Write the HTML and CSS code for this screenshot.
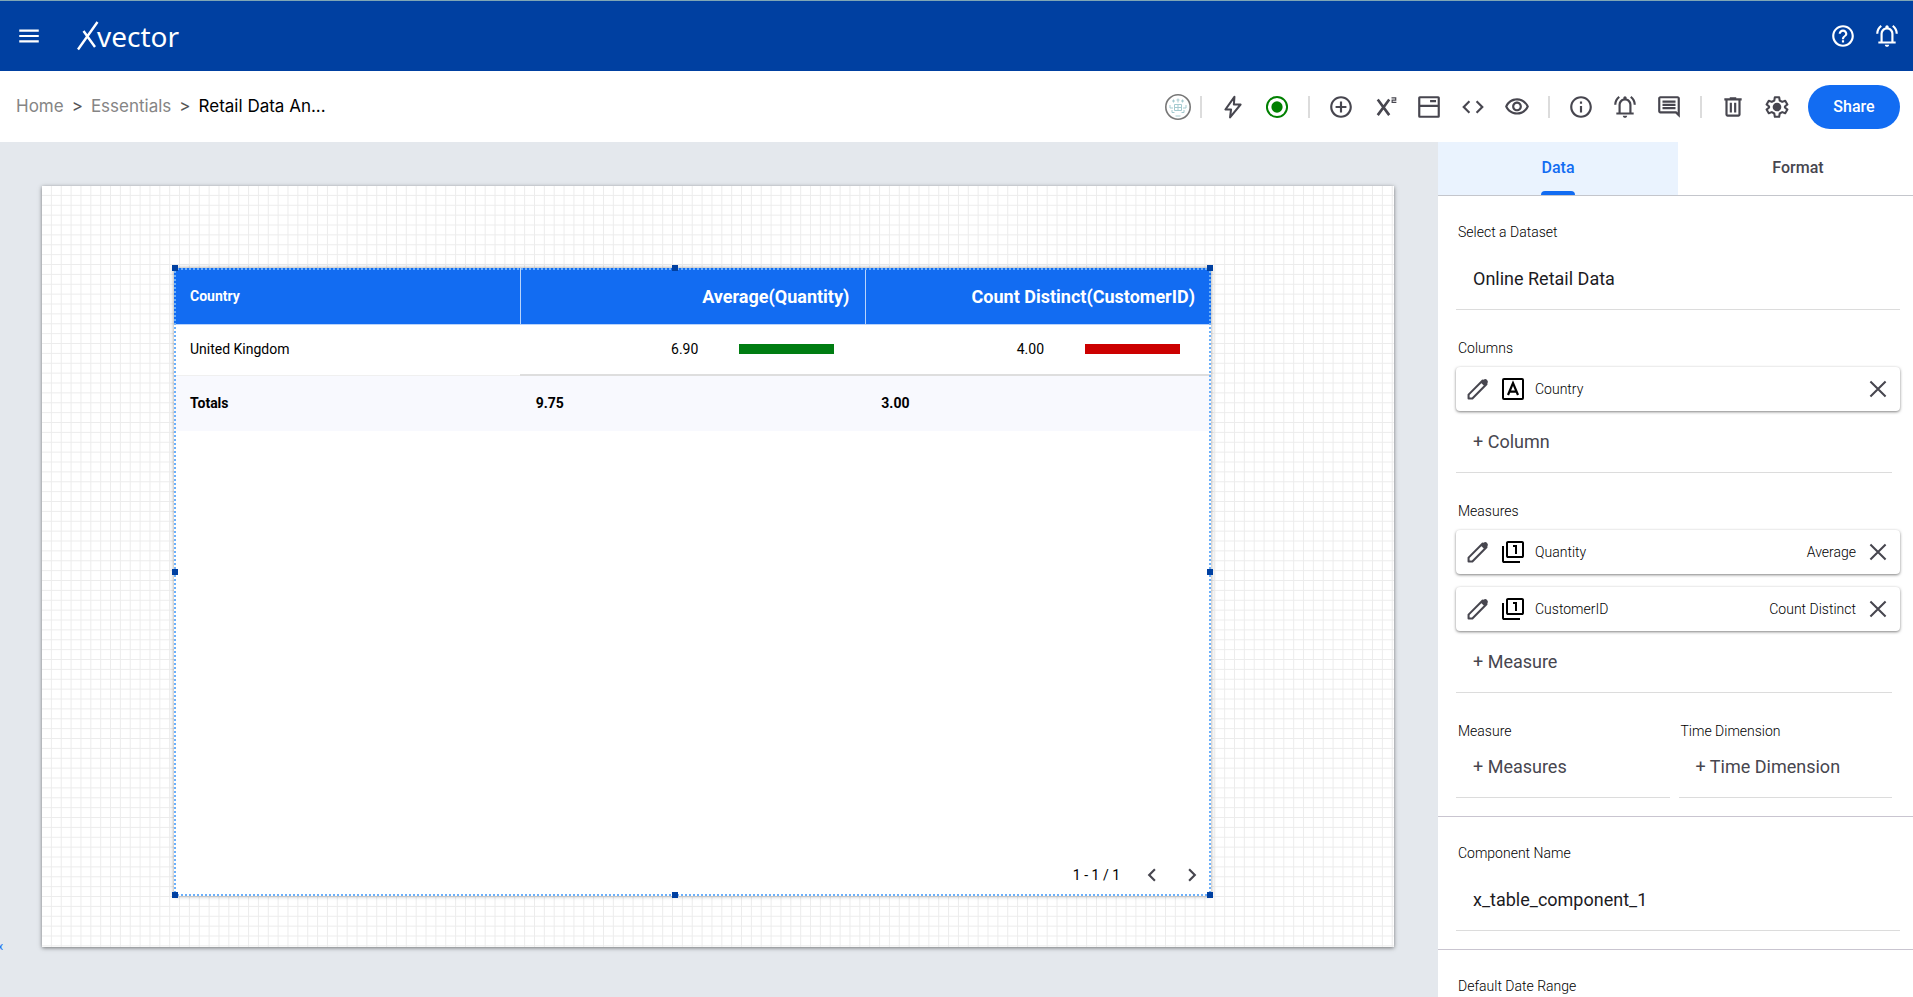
FILE: index.html
```html
<!DOCTYPE html>
<html lang="en">
  <head>
    <meta charset="UTF-8" />
    <meta name="viewport" content="width=device-width, initial-scale=1.0" />
    <title>Xvector - Retail Data Analysis</title>
    <link rel="stylesheet" href="styles.css">
  </head>
  <body>
    <!-- shared icons -->
    <svg class="sprite" aria-hidden="true">
      <symbol id="i-bell" viewBox="0 0 24 24">
        <path d="M4 19v-2h2v-7q0-2.08 1.25-3.69T10.5 4.2v-.7q0-.63.44-1.06T12 2t1.06.44.44 1.06v.7q2 .5 3.25 2.11T18 10v7h2v2H4zm8 3q-.83 0-1.41-.59T10 20h4q0 .83-.59 1.41T12 22zm-4-5h8v-7q0-1.65-1.17-2.83T12 6 9.17 7.17 8 10v7zM2 10q0-2.5 1.11-4.59T6.1 1.95l1.17 1.6q-1.47 1.1-2.37 2.78T4 10H2zm18 0q0-1.98-.9-3.66t-2.37-2.79l1.17-1.6q1.88 1.38 2.99 3.46T22 10h-2z" />
      </symbol>
      <symbol id="i-pencil" viewBox="0 0 24 24">
        <path d="M3.300 17.200L16.300 4.200l3.500 3.500-13 13H3.300z" fill="none" stroke="currentColor" stroke-width="1.900" stroke-linejoin="round" />
        <path d="M14.500 6l2.600-2.600q1.800-1.300 3.300.200t.200 3.400L18 9.500z" />
      </symbol>
      <symbol id="i-close" viewBox="0 0 24 24">
        <path d="M5 5l14 14M19 5L5 19" fill="none" stroke="currentColor" stroke-width="1.900" />
      </symbol>
      <symbol id="i-number" viewBox="0 0 24 24">
        <path d="M14 14h2V5h-4v2h2v7zm-7 4q-.83 0-1.41-.59T5 16V3q0-.83.59-1.41T7 1h14q.83 0 1.41.59T23 3v13q0 .83-.59 1.41T21 18H7zm0-2h14V3H7v13zm-4 7q-.83 0-1.41-.59T1 21V6h2v15h16v2H3z" />
      </symbol>
    </svg>

    <header class="topbar">
      <button class="icon-btn" aria-label="Menu">
        <svg viewBox="0 0 24 24"><path d="M3 18h18v-2H3v2zm0-5h18v-2H3v2zm0-7v2h18V6H3z" /></svg>
      </button>
      <a class="logo" href="#" aria-label="Xvector">
        <svg viewBox="0 0 22 30"><path d="M1 28.500L20.500 1M6.500 10L18 26" /></svg>
        <span>vector</span>
      </a>
      <div class="topbar-right">
        <button class="icon-btn" aria-label="Help">
          <svg viewBox="0 0 24 24"><path d="M11 18h2v-2h-2v2zm1-16C6.480 2 2 6.480 2 12s4.480 10 10 10 10-4.480 10-10S17.520 2 12 2zm0 18c-4.410 0-8-3.590-8-8s3.590-8 8-8 8 3.590 8 8-3.590 8-8 8zm0-14c-2.210 0-4 1.790-4 4h2c0-1.100.900-2 2-2s2 .900 2 2c0 2-3 1.750-3 5h2c0-2.250 3-2.500 3-5 0-2.210-1.790-4-4-4z" /></svg>
        </button>
        <button class="icon-btn" aria-label="Notifications"><svg><use href="#i-bell" /></svg></button>
      </div>
    </header>

    <div class="toolbar">
      <nav class="breadcrumb">
        <a href="#">Home</a>
        <span>&gt;</span>
        <a href="#">Essentials</a>
        <span>&gt;</span>
        <a href="#" class="current">Retail Data An...</a>
      </nav>
      <div class="tools">
        <button class="icon-btn avatar" aria-label="Users">
          <svg viewBox="0 0 26 26">
            <circle cx="13" cy="13" r="12.200" fill="#fff" stroke="#777" stroke-width="1.600" />
            <path d="M9.500 10.500h7v6h-7zM9.500 13.500h7M13 10.500v6M8.500 5.500v3M13 4.500v4M17.500 5.500v3M7 7h3M11.500 6h3M16 7h3M5 11v3h3M21 11v3h-3M7 16v2.500h2.500M19 16v2.500h-2.500M10.500 22h5" fill="none" stroke="#a5cbd0" />
          </svg>
        </button>
        <span class="divider"></span>
        <button class="icon-btn" aria-label="Actions">
          <svg viewBox="0 0 24 24"><path d="M13.300 2.600L5 14.300h5.200L9.300 21.600 19 9.700h-6.200z" fill="none" stroke="currentColor" stroke-width="1.900" stroke-linejoin="round" /></svg>
        </button>
        <button class="icon-btn live" aria-label="Live">
          <svg viewBox="0 0 24 24"><circle cx="12" cy="12" r="9.300" fill="none" stroke="currentColor" stroke-width="1.800" /><circle cx="12" cy="12" r="5.200" /></svg>
        </button>
        <span class="divider"></span>
        <button class="icon-btn" aria-label="Add">
          <svg viewBox="0 0 24 24"><path d="M13 7h-2v4H7v2h4v4h2v-4h4v-2h-4V7zm-1-5C6.480 2 2 6.480 2 12s4.480 10 10 10 10-4.480 10-10S17.520 2 12 2zm0 18c-4.410 0-8-3.590-8-8s3.590-8 8-8 8 3.590 8 8-3.590 8-8 8z" /></svg>
        </button>
        <button class="icon-btn" aria-label="Formula">
          <svg viewBox="0 0 24 24"><path d="M5.300 5l10.600 14.500M15.900 5L5.300 19.500" fill="none" stroke="currentColor" stroke-width="2.400" /><path d="M18 3.600h3.900v2h-3.300v2.200h3.900" fill="none" stroke="currentColor" stroke-width="1.100" /></svg>
        </button>
        <button class="icon-btn" aria-label="Layout">
          <svg viewBox="0 0 24 24"><path d="M3.500 2h17q1.500 0 1.500 1.500v17q0 1.500-1.500 1.500h-17Q2 22 2 20.500v-17Q2 2 3.500 2zM4 4v6h16V4zM4 12v8h16v-8zM13 5.500h5.500v2H13z" fill-rule="evenodd" /></svg>
        </button>
        <button class="icon-btn" aria-label="Code">
          <svg viewBox="0 0 24 24"><path d="M9.400 16.600L4.800 12l4.600-4.600L8 6l-6 6 6 6 1.400-1.400zm5.200 0l4.600-4.600-4.600-4.600L16 6l6 6-6 6-1.400-1.400z" /></svg>
        </button>
        <button class="icon-btn" aria-label="Preview">
          <svg viewBox="0 0 24 24"><path d="M12 6c3.790 0 7.170 2.130 8.820 5.500C19.170 14.870 15.790 17 12 17s-7.170-2.130-8.820-5.500C4.830 8.130 8.210 6 12 6m0-2C7 4 2.730 7.110 1 11.500 2.730 15.890 7 19 12 19s9.270-3.110 11-7.500C21.270 7.110 17 4 12 4zm0 5c1.380 0 2.500 1.120 2.500 2.500S13.380 14 12 14s-2.500-1.120-2.500-2.500S10.620 9 12 9m0-2c-2.480 0-4.500 2.020-4.500 4.500S9.520 16 12 16s4.500-2.020 4.500-4.500S14.480 7 12 7z" /></svg>
        </button>
        <span class="divider"></span>
        <button class="icon-btn" aria-label="Info">
          <svg viewBox="0 0 24 24"><path d="M11 7h2v2h-2zm0 4h2v6h-2zm1-9C6.480 2 2 6.480 2 12s4.480 10 10 10 10-4.480 10-10S17.520 2 12 2zm0 18c-4.410 0-8-3.590-8-8s3.590-8 8-8 8 3.590 8 8-3.590 8-8 8z" /></svg>
        </button>
        <button class="icon-btn" aria-label="Alerts"><svg><use href="#i-bell" /></svg></button>
        <button class="icon-btn" aria-label="Comments">
          <svg viewBox="0 0 24 24"><path d="M22 4c0-1.100-.900-2-2-2H4c-1.100 0-2 .900-2 2v12c0 1.100.900 2 2 2h14l4 4V4zm-2 0v13.170L18.830 16H4V4h16zM6 12h12v2H6zm0-3h12v2H6zm0-3h12v2H6z" /></svg>
        </button>
        <span class="divider"></span>
        <button class="icon-btn" aria-label="Delete">
          <svg viewBox="0 0 24 24"><path d="M7 21q-.830 0-1.410-.590T5 19V6H4V4h5V3h6v1h5v2h-1v13q0 .830-.590 1.410T17 21H7zM17 6H7v13h10V6zM9 17h2V8H9v9zm4 0h2V8h-2v9z" /></svg>
        </button>
        <button class="icon-btn" aria-label="Settings">
          <svg viewBox="0 0 24 24"><path d="M10 3h4l.500 3 2.300 1.300 2.800-1.100 2 3.400-2.300 1.900v1l2.300 1.900-2 3.400-2.800-1.100-2.300 1.300-.500 3h-4l-.500-3-2.300-1.300-2.800 1.100-2-3.400 2.300-1.900v-1L2.400 9.600l2-3.400 2.800 1.100L9.500 6z" fill="none" stroke="currentColor" stroke-width="1.900" stroke-linejoin="round" /><circle cx="12" cy="12" r="4" /></svg>
        </button>
        <button class="share-btn">Share</button>
      </div>
    </div>

    <main class="workspace">
      <div class="stage">
        <a class="stub" href="#">x</a>
        <div class="canvas">
          <div class="component">
            <table>
              <thead>
                <tr>
                  <th>Country</th>
                  <th class="measure">Average(Quantity)</th>
                  <th class="measure">Count Distinct(CustomerID)</th>
                </tr>
              </thead>
              <tbody>
                <tr>
                  <td>United Kingdom</td>
                  <td class="measure"><div class="metric"><span>6.90</span><i class="bar green"></i></div></td>
                  <td class="measure"><div class="metric"><span>4.00</span><i class="bar red"></i></div></td>
                </tr>
              </tbody>
              <tfoot>
                <tr>
                  <td>Totals</td>
                  <td>9.75</td>
                  <td>3.00</td>
                </tr>
              </tfoot>
            </table>
            <div class="pager">
              <span>1 - 1 / 1</span>
              <button class="icon-btn" aria-label="Previous page">
                <svg viewBox="0 0 24 24"><path d="M15.400 7.400L14 6l-6 6 6 6 1.400-1.400L10.800 12z" /></svg>
              </button>
              <button class="icon-btn" aria-label="Next page">
                <svg viewBox="0 0 24 24"><path d="M10 6L8.600 7.400l4.600 4.600-4.600 4.600L10 18l6-6z" /></svg>
              </button>
            </div>
            <span class="handle top left"></span>
            <span class="handle top middle"></span>
            <span class="handle top right"></span>
            <span class="handle center left"></span>
            <span class="handle center right"></span>
            <span class="handle bottom left"></span>
            <span class="handle bottom middle"></span>
            <span class="handle bottom right"></span>
          </div>
        </div>
      </div>

      <aside class="panel">
        <div class="tabs">
          <button class="tab active">Data</button>
          <button class="tab">Format</button>
        </div>

        <section class="group">
          <div class="field">
            <label for="dataset">Select a Dataset</label>
            <input id="dataset" type="text" value="Online Retail Data">
          </div>

          <div class="list">
            <h3>Columns</h3>
            <div class="item">
              <button class="icon-btn" aria-label="Edit Country"><svg><use href="#i-pencil" /></svg></button>
              <svg class="type" viewBox="0 0 24 24"><path d="M3 2h18q1 0 1 1v18q0 1-1 1H3q-1 0-1-1V3q0-1 1-1z" fill="none" stroke="currentColor" stroke-width="2" /><path d="M7 18L12 6l5 12M8.700 14.600h6.600" fill="none" stroke="currentColor" stroke-width="2.200" /></svg>
              <span>Country</span>
              <button class="icon-btn remove" aria-label="Remove Country"><svg><use href="#i-close" /></svg></button>
            </div>
            <button class="add">+ Column</button>
          </div>

          <div class="list">
            <h3>Measures</h3>
            <div class="item">
              <button class="icon-btn" aria-label="Edit Quantity"><svg><use href="#i-pencil" /></svg></button>
              <svg class="type"><use href="#i-number" /></svg>
              <span>Quantity</span>
              <span class="aggregate">Average</span>
              <button class="icon-btn remove" aria-label="Remove Quantity"><svg><use href="#i-close" /></svg></button>
            </div>
            <div class="item">
              <button class="icon-btn" aria-label="Edit CustomerID"><svg><use href="#i-pencil" /></svg></button>
              <svg class="type"><use href="#i-number" /></svg>
              <span>CustomerID</span>
              <span class="aggregate">Count Distinct</span>
              <button class="icon-btn remove" aria-label="Remove CustomerID"><svg><use href="#i-close" /></svg></button>
            </div>
            <button class="add">+ Measure</button>
          </div>

          <div class="pair">
            <div class="list">
              <h3>Measure</h3>
              <button class="add">+ Measures</button>
            </div>
            <div class="list">
              <h3>Time Dimension</h3>
              <button class="add">+ Time Dimension</button>
            </div>
          </div>
        </section>

        <section class="group">
          <div class="field">
            <label for="component-name">Component Name</label>
            <input id="component-name" type="text" value="x_table_component_1">
          </div>
        </section>

        <section class="group">
          <div class="field">
            <label for="date-range">Default Date Range</label>
            <input id="date-range" type="text">
          </div>
        </section>
      </aside>
    </main>
  </body>
</html>
```
FILE: styles.css
```css
* {
  box-sizing: border-box;
}
body {
  margin: 0;
  height: 100vh;
  display: flex;
  flex-direction: column;
  overflow: hidden;
  font-family: Roboto, sans-serif;
  color: #000;
  background: #fff;
}
button {
  font-family: inherit;
  border: none;
  background: none;
  padding: 0;
  cursor: pointer;
}
a {
  color: inherit;
  text-decoration: none;
}
svg {
  display: block;
  fill: currentColor;
}
.sprite {
  display: none;
}
.icon-btn {
  flex: none;
  width: 26px;
  height: 26px;
  color: #47464f;
}
.icon-btn svg {
  width: 100%;
  height: 100%;
}

/* top bar */
.topbar {
  flex: none;
  display: flex;
  align-items: center;
  height: 71px;
  padding: 0 13px 0 16px;
  border-top: 1px solid #7fa6b5;
  background: #0040a1;
  color: #fff;
}
.topbar .icon-btn {
  color: #fff;
}
.logo {
  display: flex;
  align-items: center;
  margin-left: 35px;
  font-family: "Noto Sans", sans-serif;
  font-size: 28px;
  line-height: 40px;
}
.logo svg {
  width: 22px;
  height: 30px;
  fill: none;
  stroke: #fff;
  stroke-width: 2.4;
}
.logo span {
  margin-left: -2px;
}
.topbar-right {
  display: flex;
  gap: 18px;
  margin-left: auto;
}

/* toolbar */
.toolbar {
  flex: none;
  display: flex;
  align-items: center;
  justify-content: space-between;
  height: 71px;
  padding: 0 13px 0 16px;
}
.breadcrumb {
  display: flex;
  gap: 8px;
  padding-bottom: 2px;
  font-family: Inter, sans-serif;
  font-size: 17px;
  color: #858585;
}
.breadcrumb span {
  color: #555;
}
.breadcrumb .current {
  color: #000;
}
.tools {
  display: flex;
  align-items: center;
  gap: 18px;
}
.avatar {
  margin-right: -9px;
}
.tools .live {
  color: #008000;
}
.divider {
  width: 2px;
  height: 22px;
  background: #dcdcdc;
}
.share-btn {
  width: 92px;
  height: 44px;
  border-radius: 22px;
  background: #126cf2;
  color: #fff;
  font-size: 16px;
  font-weight: 500;
}

/* workspace */
.workspace {
  flex: 1;
  display: flex;
  min-height: 0;
}
.stage {
  position: relative;
  flex: 1;
  padding: 44px 44px 0 42px;
  background: #e4e8ed;
}
.stub {
  position: absolute;
  left: -2px;
  top: 799px;
  font-size: 10px;
  line-height: 12px;
  color: #126cf2;
}
.canvas {
  position: relative;
  aspect-ratio: 16 / 9;
  background-color: #fff;
  background-image:
    linear-gradient(to left, #ececec 1px, transparent 1px),
    linear-gradient(to top, #ececec 1px, transparent 1px);
  background-size: calc(100% / 137) calc(100% / 77);
  box-shadow: 0 1px 4px rgba(0, 0, 0, 0.5);
}
.component {
  position: absolute;
  left: 132px;
  top: 82px;
  width: 1037px;
  height: 628px;
  display: flex;
  flex-direction: column;
  justify-content: space-between;
  background: #fff;
  box-shadow: 0 0 4px rgba(0, 0, 0, 0.4);
}
.component::after {
  content: "";
  position: absolute;
  inset: 0;
  border: 2px dotted #6cb0fa;
  pointer-events: none;
}
.handle {
  position: absolute;
  z-index: 1;
  width: 6px;
  height: 6px;
  background: #0040a1;
}
.handle.top {
  top: -3px;
}
.handle.center {
  top: 301px;
}
.handle.bottom {
  bottom: -2px;
}
.handle.left {
  left: -2px;
}
.handle.middle {
  left: 498px;
}
.handle.right {
  right: -2px;
}

/* table component */
table {
  width: 100%;
  table-layout: fixed;
  border-collapse: separate;
  border-spacing: 0;
  font-size: 14px;
}
th,
td {
  padding: 0 16px;
  text-align: left;
}
th {
  height: 57px;
  background: #126cf2;
  color: #fff;
  font-weight: 700;
  border-bottom: 1px solid #b8d3fb;
}
th + th {
  border-left: 1px solid #b8d3fb;
}
th.measure {
  text-align: right;
  font-size: 18px;
}
tbody td {
  height: 51px;
  padding-bottom: 2px;
  border-bottom: 1px solid #f0f0f0;
}
tbody td.measure {
  border-bottom: 2px solid #dedede;
}
tfoot td {
  height: 55px;
  padding-bottom: 2px;
  background: #f8f9fe;
  font-weight: 700;
}
.metric {
  display: flex;
  align-items: center;
  justify-content: flex-end;
  gap: 41px;
  padding-right: 15px;
}
.bar {
  width: 95px;
  height: 10px;
}
.green {
  background: #007d12;
}
.red {
  background: #cc0000;
}
.pager {
  display: flex;
  align-items: center;
  justify-content: flex-end;
  gap: 14px;
  padding: 0 6px 8px 0;
  font-size: 14px;
}
.pager span {
  margin-right: 5px;
}

/* settings panel */
.panel {
  flex: none;
  width: 475px;
  overflow: hidden;
  background: #fff;
}
.tabs {
  display: flex;
  height: 54px;
  border-bottom: 1px solid #c4c6cc;
}
.tab {
  flex: none;
  position: relative;
  width: 240px;
  padding-bottom: 2px;
  font-size: 16px;
  font-weight: 500;
  color: #47464f;
}
.tab.active {
  background: #eaf3fe;
  color: #126cf2;
}
.tab.active::after {
  content: "";
  position: absolute;
  left: 103px;
  bottom: 0;
  width: 34px;
  height: 4px;
  border-radius: 4px 4px 0 0;
  background: #126cf2;
}
.group {
  padding: 26px 13px 18px 18px;
  border-bottom: 1px solid #c9c5d0;
}
label,
h3 {
  display: block;
  margin: 0;
  padding-left: 2px;
  font-size: 14px;
  font-weight: 300;
  line-height: 20px;
}
.field input {
  display: block;
  width: 100%;
  height: 62px;
  margin-top: 6px;
  padding: 0 17px;
  border: none;
  border-bottom: 1px solid #dcdcdc;
  background: none;
  font-family: inherit;
  font-size: 18px;
  color: #1c1b1f;
}
.list {
  margin-top: 28px;
}
.item {
  display: flex;
  align-items: center;
  height: 44px;
  margin: 0 0 13px;
  padding: 0 9px;
  border-radius: 4px;
  box-shadow: 0 1px 3px rgba(0, 0, 0, 0.5);
  font-size: 14px;
  font-weight: 300;
}
h3 + .item {
  margin-top: 9px;
}
.type {
  width: 24px;
  height: 24px;
  margin: 0 10px;
}
.aggregate {
  margin-left: auto;
  margin-right: 9px;
}
.remove {
  margin-left: auto;
}
.aggregate + .remove {
  margin-left: 0;
}
.add {
  display: block;
  width: calc(100% - 8px);
  height: 62px;
  margin-top: -13px;
  padding: 0 17px;
  border-bottom: 1px solid #dcdcdc;
  text-align: left;
  font-size: 18px;
  color: #47464f;
}
.pair {
  display: grid;
  grid-template-columns: 1fr 1fr;
  gap: 9px;
  padding-right: 8px;
}
.pair .add {
  width: 100%;
  margin-top: -5px;
}
```
